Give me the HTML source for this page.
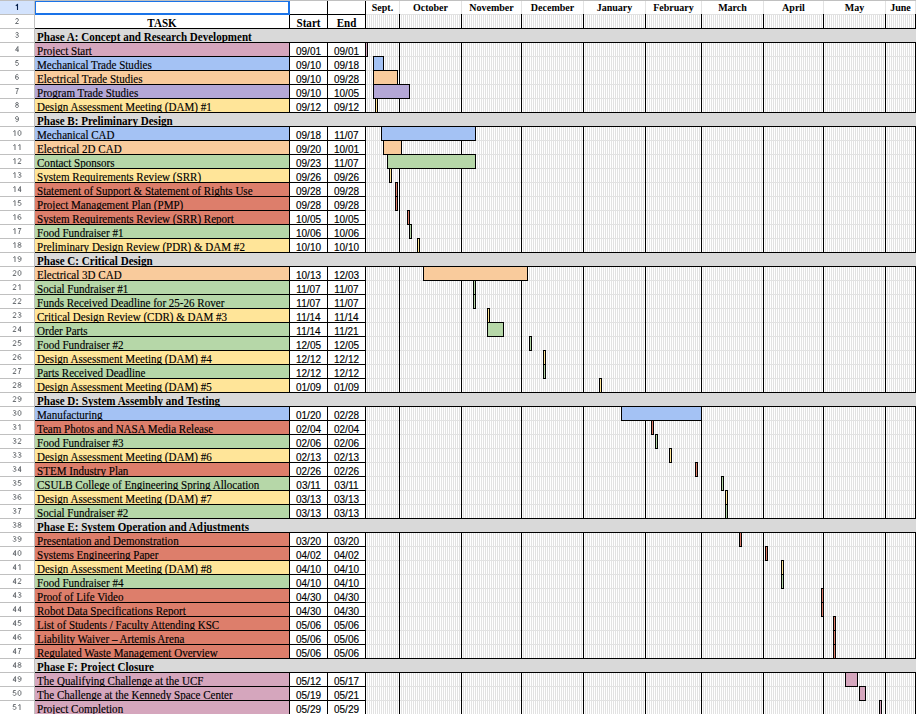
<!DOCTYPE html><html><head><meta charset="utf-8"><style>
html,body{margin:0;padding:0;background:#fff;}
body{width:916px;height:714px;overflow:hidden;position:relative;}
div{position:absolute;box-sizing:border-box;}
.t{font-family:"Liberation Serif",serif;font-size:12px;color:#000;-webkit-text-stroke:0.15px #000;white-space:nowrap;line-height:14px;overflow:hidden;}
.b{font-weight:bold;-webkit-text-stroke:0;}
.n{font-family:"Liberation Sans",sans-serif;font-size:8px;color:#5f6368;text-align:center;line-height:14px;}
.d{font-family:"Liberation Sans",sans-serif;font-size:10px;color:#000;-webkit-text-stroke:0.15px #000;text-align:center;line-height:16px;white-space:nowrap;overflow:hidden;}
</style></head><body>
<div style="left:366px;top:14px;width:550px;height:700px;background-image:linear-gradient(to bottom,#e2e2e2 1px,transparent 1px),linear-gradient(to right,#fff 1px,#e2e2e2 1px);background-size:550px 14px,2px 14px;"></div>
<div style="left:366px;top:1px;width:550px;height:13px;background:#fff"></div>
<div style="left:366px;top:14px;width:550px;height:1px;background:#e2e2e2"></div>
<div style="left:399px;top:0px;width:1px;height:14px;background:#e2e2e2"></div>
<div style="left:461px;top:0px;width:1px;height:14px;background:#e2e2e2"></div>
<div style="left:521px;top:0px;width:1px;height:14px;background:#e2e2e2"></div>
<div style="left:583px;top:0px;width:1px;height:14px;background:#e2e2e2"></div>
<div style="left:645px;top:0px;width:1px;height:14px;background:#e2e2e2"></div>
<div style="left:701px;top:0px;width:1px;height:14px;background:#e2e2e2"></div>
<div style="left:763px;top:0px;width:1px;height:14px;background:#e2e2e2"></div>
<div style="left:823px;top:0px;width:1px;height:14px;background:#e2e2e2"></div>
<div style="left:885px;top:0px;width:1px;height:14px;background:#e2e2e2"></div>
<div style="left:915px;top:0px;width:1px;height:14px;background:#e2e2e2"></div>
<div style="left:399px;top:14px;width:1px;height:700px;background:#000"></div>
<div style="left:461px;top:14px;width:1px;height:700px;background:#000"></div>
<div style="left:521px;top:14px;width:1px;height:700px;background:#000"></div>
<div style="left:583px;top:14px;width:1px;height:700px;background:#000"></div>
<div style="left:645px;top:14px;width:1px;height:700px;background:#000"></div>
<div style="left:701px;top:14px;width:1px;height:700px;background:#000"></div>
<div style="left:763px;top:14px;width:1px;height:700px;background:#000"></div>
<div style="left:823px;top:14px;width:1px;height:700px;background:#000"></div>
<div style="left:885px;top:14px;width:1px;height:700px;background:#000"></div>
<div style="left:915px;top:14px;width:1px;height:700px;background:#000"></div>
<div style="left:366px;top:28px;width:550px;height:1px;background:#000"></div>
<div style="left:0px;top:0px;width:916px;height:1px;background:#c0c0c0"></div>
<div style="left:0px;top:1px;width:34px;height:13px;background:#d3e3fd"></div>
<div style="left:0px;top:14px;width:34px;height:1px;background:#c0c0c0"></div>
<div style="left:0px;top:28px;width:34px;height:1px;background:#c0c0c0"></div>
<div style="left:0px;top:42px;width:34px;height:1px;background:#c0c0c0"></div>
<div style="left:0px;top:56px;width:34px;height:1px;background:#c0c0c0"></div>
<div style="left:0px;top:70px;width:34px;height:1px;background:#c0c0c0"></div>
<div style="left:0px;top:84px;width:34px;height:1px;background:#c0c0c0"></div>
<div style="left:0px;top:98px;width:34px;height:1px;background:#c0c0c0"></div>
<div style="left:0px;top:112px;width:34px;height:1px;background:#c0c0c0"></div>
<div style="left:0px;top:126px;width:34px;height:1px;background:#c0c0c0"></div>
<div style="left:0px;top:140px;width:34px;height:1px;background:#c0c0c0"></div>
<div style="left:0px;top:154px;width:34px;height:1px;background:#c0c0c0"></div>
<div style="left:0px;top:168px;width:34px;height:1px;background:#c0c0c0"></div>
<div style="left:0px;top:182px;width:34px;height:1px;background:#c0c0c0"></div>
<div style="left:0px;top:196px;width:34px;height:1px;background:#c0c0c0"></div>
<div style="left:0px;top:210px;width:34px;height:1px;background:#c0c0c0"></div>
<div style="left:0px;top:224px;width:34px;height:1px;background:#c0c0c0"></div>
<div style="left:0px;top:238px;width:34px;height:1px;background:#c0c0c0"></div>
<div style="left:0px;top:252px;width:34px;height:1px;background:#c0c0c0"></div>
<div style="left:0px;top:266px;width:34px;height:1px;background:#c0c0c0"></div>
<div style="left:0px;top:280px;width:34px;height:1px;background:#c0c0c0"></div>
<div style="left:0px;top:294px;width:34px;height:1px;background:#c0c0c0"></div>
<div style="left:0px;top:308px;width:34px;height:1px;background:#c0c0c0"></div>
<div style="left:0px;top:322px;width:34px;height:1px;background:#c0c0c0"></div>
<div style="left:0px;top:336px;width:34px;height:1px;background:#c0c0c0"></div>
<div style="left:0px;top:350px;width:34px;height:1px;background:#c0c0c0"></div>
<div style="left:0px;top:364px;width:34px;height:1px;background:#c0c0c0"></div>
<div style="left:0px;top:378px;width:34px;height:1px;background:#c0c0c0"></div>
<div style="left:0px;top:392px;width:34px;height:1px;background:#c0c0c0"></div>
<div style="left:0px;top:406px;width:34px;height:1px;background:#c0c0c0"></div>
<div style="left:0px;top:420px;width:34px;height:1px;background:#c0c0c0"></div>
<div style="left:0px;top:434px;width:34px;height:1px;background:#c0c0c0"></div>
<div style="left:0px;top:448px;width:34px;height:1px;background:#c0c0c0"></div>
<div style="left:0px;top:462px;width:34px;height:1px;background:#c0c0c0"></div>
<div style="left:0px;top:476px;width:34px;height:1px;background:#c0c0c0"></div>
<div style="left:0px;top:490px;width:34px;height:1px;background:#c0c0c0"></div>
<div style="left:0px;top:504px;width:34px;height:1px;background:#c0c0c0"></div>
<div style="left:0px;top:518px;width:34px;height:1px;background:#c0c0c0"></div>
<div style="left:0px;top:532px;width:34px;height:1px;background:#c0c0c0"></div>
<div style="left:0px;top:546px;width:34px;height:1px;background:#c0c0c0"></div>
<div style="left:0px;top:560px;width:34px;height:1px;background:#c0c0c0"></div>
<div style="left:0px;top:574px;width:34px;height:1px;background:#c0c0c0"></div>
<div style="left:0px;top:588px;width:34px;height:1px;background:#c0c0c0"></div>
<div style="left:0px;top:602px;width:34px;height:1px;background:#c0c0c0"></div>
<div style="left:0px;top:616px;width:34px;height:1px;background:#c0c0c0"></div>
<div style="left:0px;top:630px;width:34px;height:1px;background:#c0c0c0"></div>
<div style="left:0px;top:644px;width:34px;height:1px;background:#c0c0c0"></div>
<div style="left:0px;top:658px;width:34px;height:1px;background:#c0c0c0"></div>
<div style="left:0px;top:672px;width:34px;height:1px;background:#c0c0c0"></div>
<div style="left:0px;top:686px;width:34px;height:1px;background:#c0c0c0"></div>
<div style="left:0px;top:700px;width:34px;height:1px;background:#c0c0c0"></div>
<div style="left:0px;top:714px;width:34px;height:1px;background:#c0c0c0"></div>
<div style="left:34px;top:0px;width:1px;height:714px;background:#c0c0c0"></div>
<svg style="position:absolute;left:0;top:0" width="34" height="714" viewBox="0 0 34 714"><path transform="translate(15.0,4)" d="M0.8,1.7 L2.5,0.5 L2.5,6" fill="none" stroke="#041e49" stroke-width="1.1"/><path transform="translate(15.0,18)" d="M0.6,1.5 C0.8,0.7 1.3,0.5 2,0.5 C2.9,0.5 3.4,1 3.4,1.8 C3.4,2.8 2.4,3.5 0.5,5.5 L3.6,5.5" fill="none" stroke="#5f6368" stroke-width="0.9"/><path transform="translate(15.0,32)" d="M0.6,1.2 C0.9,0.7 1.4,0.5 2,0.5 C2.9,0.5 3.3,1 3.3,1.6 C3.3,2.4 2.6,2.8 1.6,2.8 C2.8,2.8 3.5,3.3 3.5,4.1 C3.5,5 2.8,5.5 2,5.5 C1.3,5.5 0.7,5.2 0.5,4.6" fill="none" stroke="#5f6368" stroke-width="0.9"/><path transform="translate(15.0,46)" d="M2.9,6 L2.9,0.5 L0.5,4.2 L3.8,4.2" fill="none" stroke="#5f6368" stroke-width="0.9"/><path transform="translate(15.0,60)" d="M3.3,0.5 L1,0.5 L0.7,2.9 C1.1,2.5 1.5,2.4 2,2.4 C2.9,2.4 3.5,3 3.5,3.9 C3.5,4.9 2.9,5.5 2,5.5 C1.3,5.5 0.7,5.2 0.5,4.6" fill="none" stroke="#5f6368" stroke-width="0.9"/><path transform="translate(15.0,74)" d="M3.3,1.1 C3.1,0.7 2.6,0.5 2.1,0.5 C1,0.5 0.5,1.6 0.5,3.2 C0.5,4.6 1,5.5 2,5.5 C2.9,5.5 3.5,4.9 3.5,4 C3.5,3.1 2.9,2.6 2.1,2.6 C1.3,2.6 0.7,3 0.5,3.6" fill="none" stroke="#5f6368" stroke-width="0.9"/><path transform="translate(15.0,88)" d="M0.5,0.5 L3.5,0.5 C2.4,1.9 1.7,3.6 1.6,6" fill="none" stroke="#5f6368" stroke-width="0.9"/><path transform="translate(15.0,102)" d="M2,2.8 C1.2,2.8 0.7,2.3 0.7,1.65 C0.7,1 1.2,0.5 2,0.5 C2.8,0.5 3.3,1 3.3,1.65 C3.3,2.3 2.8,2.8 2,2.8 C1.1,2.8 0.5,3.3 0.5,4.15 C0.5,5 1.1,5.5 2,5.5 C2.9,5.5 3.5,5 3.5,4.15 C3.5,3.3 2.9,2.8 2,2.8 Z" fill="none" stroke="#5f6368" stroke-width="0.9"/><path transform="translate(15.0,116) rotate(180 2 3)" d="M3.3,1.1 C3.1,0.7 2.6,0.5 2.1,0.5 C1,0.5 0.5,1.6 0.5,3.2 C0.5,4.6 1,5.5 2,5.5 C2.9,5.5 3.5,4.9 3.5,4 C3.5,3.1 2.9,2.6 2.1,2.6 C1.3,2.6 0.7,3 0.5,3.6" fill="none" stroke="#5f6368" stroke-width="0.9"/><path transform="translate(12.5,130)" d="M0.8,1.7 L2.5,0.5 L2.5,6" fill="none" stroke="#5f6368" stroke-width="0.9"/><path transform="translate(17.5,130)" d="M2,0.5 C0.9,0.5 0.5,1.6 0.5,3 C0.5,4.4 0.9,5.5 2,5.5 C3.1,5.5 3.5,4.4 3.5,3 C3.5,1.6 3.1,0.5 2,0.5 Z" fill="none" stroke="#5f6368" stroke-width="0.9"/><path transform="translate(12.5,144)" d="M0.8,1.7 L2.5,0.5 L2.5,6" fill="none" stroke="#5f6368" stroke-width="0.9"/><path transform="translate(17.5,144)" d="M0.8,1.7 L2.5,0.5 L2.5,6" fill="none" stroke="#5f6368" stroke-width="0.9"/><path transform="translate(12.5,158)" d="M0.8,1.7 L2.5,0.5 L2.5,6" fill="none" stroke="#5f6368" stroke-width="0.9"/><path transform="translate(17.5,158)" d="M0.6,1.5 C0.8,0.7 1.3,0.5 2,0.5 C2.9,0.5 3.4,1 3.4,1.8 C3.4,2.8 2.4,3.5 0.5,5.5 L3.6,5.5" fill="none" stroke="#5f6368" stroke-width="0.9"/><path transform="translate(12.5,172)" d="M0.8,1.7 L2.5,0.5 L2.5,6" fill="none" stroke="#5f6368" stroke-width="0.9"/><path transform="translate(17.5,172)" d="M0.6,1.2 C0.9,0.7 1.4,0.5 2,0.5 C2.9,0.5 3.3,1 3.3,1.6 C3.3,2.4 2.6,2.8 1.6,2.8 C2.8,2.8 3.5,3.3 3.5,4.1 C3.5,5 2.8,5.5 2,5.5 C1.3,5.5 0.7,5.2 0.5,4.6" fill="none" stroke="#5f6368" stroke-width="0.9"/><path transform="translate(12.5,186)" d="M0.8,1.7 L2.5,0.5 L2.5,6" fill="none" stroke="#5f6368" stroke-width="0.9"/><path transform="translate(17.5,186)" d="M2.9,6 L2.9,0.5 L0.5,4.2 L3.8,4.2" fill="none" stroke="#5f6368" stroke-width="0.9"/><path transform="translate(12.5,200)" d="M0.8,1.7 L2.5,0.5 L2.5,6" fill="none" stroke="#5f6368" stroke-width="0.9"/><path transform="translate(17.5,200)" d="M3.3,0.5 L1,0.5 L0.7,2.9 C1.1,2.5 1.5,2.4 2,2.4 C2.9,2.4 3.5,3 3.5,3.9 C3.5,4.9 2.9,5.5 2,5.5 C1.3,5.5 0.7,5.2 0.5,4.6" fill="none" stroke="#5f6368" stroke-width="0.9"/><path transform="translate(12.5,214)" d="M0.8,1.7 L2.5,0.5 L2.5,6" fill="none" stroke="#5f6368" stroke-width="0.9"/><path transform="translate(17.5,214)" d="M3.3,1.1 C3.1,0.7 2.6,0.5 2.1,0.5 C1,0.5 0.5,1.6 0.5,3.2 C0.5,4.6 1,5.5 2,5.5 C2.9,5.5 3.5,4.9 3.5,4 C3.5,3.1 2.9,2.6 2.1,2.6 C1.3,2.6 0.7,3 0.5,3.6" fill="none" stroke="#5f6368" stroke-width="0.9"/><path transform="translate(12.5,228)" d="M0.8,1.7 L2.5,0.5 L2.5,6" fill="none" stroke="#5f6368" stroke-width="0.9"/><path transform="translate(17.5,228)" d="M0.5,0.5 L3.5,0.5 C2.4,1.9 1.7,3.6 1.6,6" fill="none" stroke="#5f6368" stroke-width="0.9"/><path transform="translate(12.5,242)" d="M0.8,1.7 L2.5,0.5 L2.5,6" fill="none" stroke="#5f6368" stroke-width="0.9"/><path transform="translate(17.5,242)" d="M2,2.8 C1.2,2.8 0.7,2.3 0.7,1.65 C0.7,1 1.2,0.5 2,0.5 C2.8,0.5 3.3,1 3.3,1.65 C3.3,2.3 2.8,2.8 2,2.8 C1.1,2.8 0.5,3.3 0.5,4.15 C0.5,5 1.1,5.5 2,5.5 C2.9,5.5 3.5,5 3.5,4.15 C3.5,3.3 2.9,2.8 2,2.8 Z" fill="none" stroke="#5f6368" stroke-width="0.9"/><path transform="translate(12.5,256)" d="M0.8,1.7 L2.5,0.5 L2.5,6" fill="none" stroke="#5f6368" stroke-width="0.9"/><path transform="translate(17.5,256) rotate(180 2 3)" d="M3.3,1.1 C3.1,0.7 2.6,0.5 2.1,0.5 C1,0.5 0.5,1.6 0.5,3.2 C0.5,4.6 1,5.5 2,5.5 C2.9,5.5 3.5,4.9 3.5,4 C3.5,3.1 2.9,2.6 2.1,2.6 C1.3,2.6 0.7,3 0.5,3.6" fill="none" stroke="#5f6368" stroke-width="0.9"/><path transform="translate(12.5,270)" d="M0.6,1.5 C0.8,0.7 1.3,0.5 2,0.5 C2.9,0.5 3.4,1 3.4,1.8 C3.4,2.8 2.4,3.5 0.5,5.5 L3.6,5.5" fill="none" stroke="#5f6368" stroke-width="0.9"/><path transform="translate(17.5,270)" d="M2,0.5 C0.9,0.5 0.5,1.6 0.5,3 C0.5,4.4 0.9,5.5 2,5.5 C3.1,5.5 3.5,4.4 3.5,3 C3.5,1.6 3.1,0.5 2,0.5 Z" fill="none" stroke="#5f6368" stroke-width="0.9"/><path transform="translate(12.5,284)" d="M0.6,1.5 C0.8,0.7 1.3,0.5 2,0.5 C2.9,0.5 3.4,1 3.4,1.8 C3.4,2.8 2.4,3.5 0.5,5.5 L3.6,5.5" fill="none" stroke="#5f6368" stroke-width="0.9"/><path transform="translate(17.5,284)" d="M0.8,1.7 L2.5,0.5 L2.5,6" fill="none" stroke="#5f6368" stroke-width="0.9"/><path transform="translate(12.5,298)" d="M0.6,1.5 C0.8,0.7 1.3,0.5 2,0.5 C2.9,0.5 3.4,1 3.4,1.8 C3.4,2.8 2.4,3.5 0.5,5.5 L3.6,5.5" fill="none" stroke="#5f6368" stroke-width="0.9"/><path transform="translate(17.5,298)" d="M0.6,1.5 C0.8,0.7 1.3,0.5 2,0.5 C2.9,0.5 3.4,1 3.4,1.8 C3.4,2.8 2.4,3.5 0.5,5.5 L3.6,5.5" fill="none" stroke="#5f6368" stroke-width="0.9"/><path transform="translate(12.5,312)" d="M0.6,1.5 C0.8,0.7 1.3,0.5 2,0.5 C2.9,0.5 3.4,1 3.4,1.8 C3.4,2.8 2.4,3.5 0.5,5.5 L3.6,5.5" fill="none" stroke="#5f6368" stroke-width="0.9"/><path transform="translate(17.5,312)" d="M0.6,1.2 C0.9,0.7 1.4,0.5 2,0.5 C2.9,0.5 3.3,1 3.3,1.6 C3.3,2.4 2.6,2.8 1.6,2.8 C2.8,2.8 3.5,3.3 3.5,4.1 C3.5,5 2.8,5.5 2,5.5 C1.3,5.5 0.7,5.2 0.5,4.6" fill="none" stroke="#5f6368" stroke-width="0.9"/><path transform="translate(12.5,326)" d="M0.6,1.5 C0.8,0.7 1.3,0.5 2,0.5 C2.9,0.5 3.4,1 3.4,1.8 C3.4,2.8 2.4,3.5 0.5,5.5 L3.6,5.5" fill="none" stroke="#5f6368" stroke-width="0.9"/><path transform="translate(17.5,326)" d="M2.9,6 L2.9,0.5 L0.5,4.2 L3.8,4.2" fill="none" stroke="#5f6368" stroke-width="0.9"/><path transform="translate(12.5,340)" d="M0.6,1.5 C0.8,0.7 1.3,0.5 2,0.5 C2.9,0.5 3.4,1 3.4,1.8 C3.4,2.8 2.4,3.5 0.5,5.5 L3.6,5.5" fill="none" stroke="#5f6368" stroke-width="0.9"/><path transform="translate(17.5,340)" d="M3.3,0.5 L1,0.5 L0.7,2.9 C1.1,2.5 1.5,2.4 2,2.4 C2.9,2.4 3.5,3 3.5,3.9 C3.5,4.9 2.9,5.5 2,5.5 C1.3,5.5 0.7,5.2 0.5,4.6" fill="none" stroke="#5f6368" stroke-width="0.9"/><path transform="translate(12.5,354)" d="M0.6,1.5 C0.8,0.7 1.3,0.5 2,0.5 C2.9,0.5 3.4,1 3.4,1.8 C3.4,2.8 2.4,3.5 0.5,5.5 L3.6,5.5" fill="none" stroke="#5f6368" stroke-width="0.9"/><path transform="translate(17.5,354)" d="M3.3,1.1 C3.1,0.7 2.6,0.5 2.1,0.5 C1,0.5 0.5,1.6 0.5,3.2 C0.5,4.6 1,5.5 2,5.5 C2.9,5.5 3.5,4.9 3.5,4 C3.5,3.1 2.9,2.6 2.1,2.6 C1.3,2.6 0.7,3 0.5,3.6" fill="none" stroke="#5f6368" stroke-width="0.9"/><path transform="translate(12.5,368)" d="M0.6,1.5 C0.8,0.7 1.3,0.5 2,0.5 C2.9,0.5 3.4,1 3.4,1.8 C3.4,2.8 2.4,3.5 0.5,5.5 L3.6,5.5" fill="none" stroke="#5f6368" stroke-width="0.9"/><path transform="translate(17.5,368)" d="M0.5,0.5 L3.5,0.5 C2.4,1.9 1.7,3.6 1.6,6" fill="none" stroke="#5f6368" stroke-width="0.9"/><path transform="translate(12.5,382)" d="M0.6,1.5 C0.8,0.7 1.3,0.5 2,0.5 C2.9,0.5 3.4,1 3.4,1.8 C3.4,2.8 2.4,3.5 0.5,5.5 L3.6,5.5" fill="none" stroke="#5f6368" stroke-width="0.9"/><path transform="translate(17.5,382)" d="M2,2.8 C1.2,2.8 0.7,2.3 0.7,1.65 C0.7,1 1.2,0.5 2,0.5 C2.8,0.5 3.3,1 3.3,1.65 C3.3,2.3 2.8,2.8 2,2.8 C1.1,2.8 0.5,3.3 0.5,4.15 C0.5,5 1.1,5.5 2,5.5 C2.9,5.5 3.5,5 3.5,4.15 C3.5,3.3 2.9,2.8 2,2.8 Z" fill="none" stroke="#5f6368" stroke-width="0.9"/><path transform="translate(12.5,396)" d="M0.6,1.5 C0.8,0.7 1.3,0.5 2,0.5 C2.9,0.5 3.4,1 3.4,1.8 C3.4,2.8 2.4,3.5 0.5,5.5 L3.6,5.5" fill="none" stroke="#5f6368" stroke-width="0.9"/><path transform="translate(17.5,396) rotate(180 2 3)" d="M3.3,1.1 C3.1,0.7 2.6,0.5 2.1,0.5 C1,0.5 0.5,1.6 0.5,3.2 C0.5,4.6 1,5.5 2,5.5 C2.9,5.5 3.5,4.9 3.5,4 C3.5,3.1 2.9,2.6 2.1,2.6 C1.3,2.6 0.7,3 0.5,3.6" fill="none" stroke="#5f6368" stroke-width="0.9"/><path transform="translate(12.5,410)" d="M0.6,1.2 C0.9,0.7 1.4,0.5 2,0.5 C2.9,0.5 3.3,1 3.3,1.6 C3.3,2.4 2.6,2.8 1.6,2.8 C2.8,2.8 3.5,3.3 3.5,4.1 C3.5,5 2.8,5.5 2,5.5 C1.3,5.5 0.7,5.2 0.5,4.6" fill="none" stroke="#5f6368" stroke-width="0.9"/><path transform="translate(17.5,410)" d="M2,0.5 C0.9,0.5 0.5,1.6 0.5,3 C0.5,4.4 0.9,5.5 2,5.5 C3.1,5.5 3.5,4.4 3.5,3 C3.5,1.6 3.1,0.5 2,0.5 Z" fill="none" stroke="#5f6368" stroke-width="0.9"/><path transform="translate(12.5,424)" d="M0.6,1.2 C0.9,0.7 1.4,0.5 2,0.5 C2.9,0.5 3.3,1 3.3,1.6 C3.3,2.4 2.6,2.8 1.6,2.8 C2.8,2.8 3.5,3.3 3.5,4.1 C3.5,5 2.8,5.5 2,5.5 C1.3,5.5 0.7,5.2 0.5,4.6" fill="none" stroke="#5f6368" stroke-width="0.9"/><path transform="translate(17.5,424)" d="M0.8,1.7 L2.5,0.5 L2.5,6" fill="none" stroke="#5f6368" stroke-width="0.9"/><path transform="translate(12.5,438)" d="M0.6,1.2 C0.9,0.7 1.4,0.5 2,0.5 C2.9,0.5 3.3,1 3.3,1.6 C3.3,2.4 2.6,2.8 1.6,2.8 C2.8,2.8 3.5,3.3 3.5,4.1 C3.5,5 2.8,5.5 2,5.5 C1.3,5.5 0.7,5.2 0.5,4.6" fill="none" stroke="#5f6368" stroke-width="0.9"/><path transform="translate(17.5,438)" d="M0.6,1.5 C0.8,0.7 1.3,0.5 2,0.5 C2.9,0.5 3.4,1 3.4,1.8 C3.4,2.8 2.4,3.5 0.5,5.5 L3.6,5.5" fill="none" stroke="#5f6368" stroke-width="0.9"/><path transform="translate(12.5,452)" d="M0.6,1.2 C0.9,0.7 1.4,0.5 2,0.5 C2.9,0.5 3.3,1 3.3,1.6 C3.3,2.4 2.6,2.8 1.6,2.8 C2.8,2.8 3.5,3.3 3.5,4.1 C3.5,5 2.8,5.5 2,5.5 C1.3,5.5 0.7,5.2 0.5,4.6" fill="none" stroke="#5f6368" stroke-width="0.9"/><path transform="translate(17.5,452)" d="M0.6,1.2 C0.9,0.7 1.4,0.5 2,0.5 C2.9,0.5 3.3,1 3.3,1.6 C3.3,2.4 2.6,2.8 1.6,2.8 C2.8,2.8 3.5,3.3 3.5,4.1 C3.5,5 2.8,5.5 2,5.5 C1.3,5.5 0.7,5.2 0.5,4.6" fill="none" stroke="#5f6368" stroke-width="0.9"/><path transform="translate(12.5,466)" d="M0.6,1.2 C0.9,0.7 1.4,0.5 2,0.5 C2.9,0.5 3.3,1 3.3,1.6 C3.3,2.4 2.6,2.8 1.6,2.8 C2.8,2.8 3.5,3.3 3.5,4.1 C3.5,5 2.8,5.5 2,5.5 C1.3,5.5 0.7,5.2 0.5,4.6" fill="none" stroke="#5f6368" stroke-width="0.9"/><path transform="translate(17.5,466)" d="M2.9,6 L2.9,0.5 L0.5,4.2 L3.8,4.2" fill="none" stroke="#5f6368" stroke-width="0.9"/><path transform="translate(12.5,480)" d="M0.6,1.2 C0.9,0.7 1.4,0.5 2,0.5 C2.9,0.5 3.3,1 3.3,1.6 C3.3,2.4 2.6,2.8 1.6,2.8 C2.8,2.8 3.5,3.3 3.5,4.1 C3.5,5 2.8,5.5 2,5.5 C1.3,5.5 0.7,5.2 0.5,4.6" fill="none" stroke="#5f6368" stroke-width="0.9"/><path transform="translate(17.5,480)" d="M3.3,0.5 L1,0.5 L0.7,2.9 C1.1,2.5 1.5,2.4 2,2.4 C2.9,2.4 3.5,3 3.5,3.9 C3.5,4.9 2.9,5.5 2,5.5 C1.3,5.5 0.7,5.2 0.5,4.6" fill="none" stroke="#5f6368" stroke-width="0.9"/><path transform="translate(12.5,494)" d="M0.6,1.2 C0.9,0.7 1.4,0.5 2,0.5 C2.9,0.5 3.3,1 3.3,1.6 C3.3,2.4 2.6,2.8 1.6,2.8 C2.8,2.8 3.5,3.3 3.5,4.1 C3.5,5 2.8,5.5 2,5.5 C1.3,5.5 0.7,5.2 0.5,4.6" fill="none" stroke="#5f6368" stroke-width="0.9"/><path transform="translate(17.5,494)" d="M3.3,1.1 C3.1,0.7 2.6,0.5 2.1,0.5 C1,0.5 0.5,1.6 0.5,3.2 C0.5,4.6 1,5.5 2,5.5 C2.9,5.5 3.5,4.9 3.5,4 C3.5,3.1 2.9,2.6 2.1,2.6 C1.3,2.6 0.7,3 0.5,3.6" fill="none" stroke="#5f6368" stroke-width="0.9"/><path transform="translate(12.5,508)" d="M0.6,1.2 C0.9,0.7 1.4,0.5 2,0.5 C2.9,0.5 3.3,1 3.3,1.6 C3.3,2.4 2.6,2.8 1.6,2.8 C2.8,2.8 3.5,3.3 3.5,4.1 C3.5,5 2.8,5.5 2,5.5 C1.3,5.5 0.7,5.2 0.5,4.6" fill="none" stroke="#5f6368" stroke-width="0.9"/><path transform="translate(17.5,508)" d="M0.5,0.5 L3.5,0.5 C2.4,1.9 1.7,3.6 1.6,6" fill="none" stroke="#5f6368" stroke-width="0.9"/><path transform="translate(12.5,522)" d="M0.6,1.2 C0.9,0.7 1.4,0.5 2,0.5 C2.9,0.5 3.3,1 3.3,1.6 C3.3,2.4 2.6,2.8 1.6,2.8 C2.8,2.8 3.5,3.3 3.5,4.1 C3.5,5 2.8,5.5 2,5.5 C1.3,5.5 0.7,5.2 0.5,4.6" fill="none" stroke="#5f6368" stroke-width="0.9"/><path transform="translate(17.5,522)" d="M2,2.8 C1.2,2.8 0.7,2.3 0.7,1.65 C0.7,1 1.2,0.5 2,0.5 C2.8,0.5 3.3,1 3.3,1.65 C3.3,2.3 2.8,2.8 2,2.8 C1.1,2.8 0.5,3.3 0.5,4.15 C0.5,5 1.1,5.5 2,5.5 C2.9,5.5 3.5,5 3.5,4.15 C3.5,3.3 2.9,2.8 2,2.8 Z" fill="none" stroke="#5f6368" stroke-width="0.9"/><path transform="translate(12.5,536)" d="M0.6,1.2 C0.9,0.7 1.4,0.5 2,0.5 C2.9,0.5 3.3,1 3.3,1.6 C3.3,2.4 2.6,2.8 1.6,2.8 C2.8,2.8 3.5,3.3 3.5,4.1 C3.5,5 2.8,5.5 2,5.5 C1.3,5.5 0.7,5.2 0.5,4.6" fill="none" stroke="#5f6368" stroke-width="0.9"/><path transform="translate(17.5,536) rotate(180 2 3)" d="M3.3,1.1 C3.1,0.7 2.6,0.5 2.1,0.5 C1,0.5 0.5,1.6 0.5,3.2 C0.5,4.6 1,5.5 2,5.5 C2.9,5.5 3.5,4.9 3.5,4 C3.5,3.1 2.9,2.6 2.1,2.6 C1.3,2.6 0.7,3 0.5,3.6" fill="none" stroke="#5f6368" stroke-width="0.9"/><path transform="translate(12.5,550)" d="M2.9,6 L2.9,0.5 L0.5,4.2 L3.8,4.2" fill="none" stroke="#5f6368" stroke-width="0.9"/><path transform="translate(17.5,550)" d="M2,0.5 C0.9,0.5 0.5,1.6 0.5,3 C0.5,4.4 0.9,5.5 2,5.5 C3.1,5.5 3.5,4.4 3.5,3 C3.5,1.6 3.1,0.5 2,0.5 Z" fill="none" stroke="#5f6368" stroke-width="0.9"/><path transform="translate(12.5,564)" d="M2.9,6 L2.9,0.5 L0.5,4.2 L3.8,4.2" fill="none" stroke="#5f6368" stroke-width="0.9"/><path transform="translate(17.5,564)" d="M0.8,1.7 L2.5,0.5 L2.5,6" fill="none" stroke="#5f6368" stroke-width="0.9"/><path transform="translate(12.5,578)" d="M2.9,6 L2.9,0.5 L0.5,4.2 L3.8,4.2" fill="none" stroke="#5f6368" stroke-width="0.9"/><path transform="translate(17.5,578)" d="M0.6,1.5 C0.8,0.7 1.3,0.5 2,0.5 C2.9,0.5 3.4,1 3.4,1.8 C3.4,2.8 2.4,3.5 0.5,5.5 L3.6,5.5" fill="none" stroke="#5f6368" stroke-width="0.9"/><path transform="translate(12.5,592)" d="M2.9,6 L2.9,0.5 L0.5,4.2 L3.8,4.2" fill="none" stroke="#5f6368" stroke-width="0.9"/><path transform="translate(17.5,592)" d="M0.6,1.2 C0.9,0.7 1.4,0.5 2,0.5 C2.9,0.5 3.3,1 3.3,1.6 C3.3,2.4 2.6,2.8 1.6,2.8 C2.8,2.8 3.5,3.3 3.5,4.1 C3.5,5 2.8,5.5 2,5.5 C1.3,5.5 0.7,5.2 0.5,4.6" fill="none" stroke="#5f6368" stroke-width="0.9"/><path transform="translate(12.5,606)" d="M2.9,6 L2.9,0.5 L0.5,4.2 L3.8,4.2" fill="none" stroke="#5f6368" stroke-width="0.9"/><path transform="translate(17.5,606)" d="M2.9,6 L2.9,0.5 L0.5,4.2 L3.8,4.2" fill="none" stroke="#5f6368" stroke-width="0.9"/><path transform="translate(12.5,620)" d="M2.9,6 L2.9,0.5 L0.5,4.2 L3.8,4.2" fill="none" stroke="#5f6368" stroke-width="0.9"/><path transform="translate(17.5,620)" d="M3.3,0.5 L1,0.5 L0.7,2.9 C1.1,2.5 1.5,2.4 2,2.4 C2.9,2.4 3.5,3 3.5,3.9 C3.5,4.9 2.9,5.5 2,5.5 C1.3,5.5 0.7,5.2 0.5,4.6" fill="none" stroke="#5f6368" stroke-width="0.9"/><path transform="translate(12.5,634)" d="M2.9,6 L2.9,0.5 L0.5,4.2 L3.8,4.2" fill="none" stroke="#5f6368" stroke-width="0.9"/><path transform="translate(17.5,634)" d="M3.3,1.1 C3.1,0.7 2.6,0.5 2.1,0.5 C1,0.5 0.5,1.6 0.5,3.2 C0.5,4.6 1,5.5 2,5.5 C2.9,5.5 3.5,4.9 3.5,4 C3.5,3.1 2.9,2.6 2.1,2.6 C1.3,2.6 0.7,3 0.5,3.6" fill="none" stroke="#5f6368" stroke-width="0.9"/><path transform="translate(12.5,648)" d="M2.9,6 L2.9,0.5 L0.5,4.2 L3.8,4.2" fill="none" stroke="#5f6368" stroke-width="0.9"/><path transform="translate(17.5,648)" d="M0.5,0.5 L3.5,0.5 C2.4,1.9 1.7,3.6 1.6,6" fill="none" stroke="#5f6368" stroke-width="0.9"/><path transform="translate(12.5,662)" d="M2.9,6 L2.9,0.5 L0.5,4.2 L3.8,4.2" fill="none" stroke="#5f6368" stroke-width="0.9"/><path transform="translate(17.5,662)" d="M2,2.8 C1.2,2.8 0.7,2.3 0.7,1.65 C0.7,1 1.2,0.5 2,0.5 C2.8,0.5 3.3,1 3.3,1.65 C3.3,2.3 2.8,2.8 2,2.8 C1.1,2.8 0.5,3.3 0.5,4.15 C0.5,5 1.1,5.5 2,5.5 C2.9,5.5 3.5,5 3.5,4.15 C3.5,3.3 2.9,2.8 2,2.8 Z" fill="none" stroke="#5f6368" stroke-width="0.9"/><path transform="translate(12.5,676)" d="M2.9,6 L2.9,0.5 L0.5,4.2 L3.8,4.2" fill="none" stroke="#5f6368" stroke-width="0.9"/><path transform="translate(17.5,676) rotate(180 2 3)" d="M3.3,1.1 C3.1,0.7 2.6,0.5 2.1,0.5 C1,0.5 0.5,1.6 0.5,3.2 C0.5,4.6 1,5.5 2,5.5 C2.9,5.5 3.5,4.9 3.5,4 C3.5,3.1 2.9,2.6 2.1,2.6 C1.3,2.6 0.7,3 0.5,3.6" fill="none" stroke="#5f6368" stroke-width="0.9"/><path transform="translate(12.5,690)" d="M3.3,0.5 L1,0.5 L0.7,2.9 C1.1,2.5 1.5,2.4 2,2.4 C2.9,2.4 3.5,3 3.5,3.9 C3.5,4.9 2.9,5.5 2,5.5 C1.3,5.5 0.7,5.2 0.5,4.6" fill="none" stroke="#5f6368" stroke-width="0.9"/><path transform="translate(17.5,690)" d="M2,0.5 C0.9,0.5 0.5,1.6 0.5,3 C0.5,4.4 0.9,5.5 2,5.5 C3.1,5.5 3.5,4.4 3.5,3 C3.5,1.6 3.1,0.5 2,0.5 Z" fill="none" stroke="#5f6368" stroke-width="0.9"/><path transform="translate(12.5,704)" d="M3.3,0.5 L1,0.5 L0.7,2.9 C1.1,2.5 1.5,2.4 2,2.4 C2.9,2.4 3.5,3 3.5,3.9 C3.5,4.9 2.9,5.5 2,5.5 C1.3,5.5 0.7,5.2 0.5,4.6" fill="none" stroke="#5f6368" stroke-width="0.9"/><path transform="translate(17.5,704)" d="M0.8,1.7 L2.5,0.5 L2.5,6" fill="none" stroke="#5f6368" stroke-width="0.9"/></svg>
<div class="t b" style="left:366px;top:1px;width:33px;height:13px;text-align:center;font-size:10px;">Sept.</div>
<div class="t b" style="left:400px;top:1px;width:61px;height:13px;text-align:center;font-size:10px;">October</div>
<div class="t b" style="left:462px;top:1px;width:59px;height:13px;text-align:center;font-size:10px;">November</div>
<div class="t b" style="left:522px;top:1px;width:61px;height:13px;text-align:center;font-size:10px;">December</div>
<div class="t b" style="left:584px;top:1px;width:61px;height:13px;text-align:center;font-size:10px;">January</div>
<div class="t b" style="left:646px;top:1px;width:55px;height:13px;text-align:center;font-size:10px;">February</div>
<div class="t b" style="left:702px;top:1px;width:61px;height:13px;text-align:center;font-size:10px;">March</div>
<div class="t b" style="left:764px;top:1px;width:59px;height:13px;text-align:center;font-size:10px;">April</div>
<div class="t b" style="left:824px;top:1px;width:61px;height:13px;text-align:center;font-size:10px;">May</div>
<div class="t b" style="left:886px;top:1px;width:29px;height:13px;text-align:center;font-size:10px;">June</div>
<div style="left:289px;top:14px;width:77px;height:1px;background:#000"></div>
<div style="left:327px;top:1px;width:1px;height:14px;background:#000"></div>
<div style="left:365px;top:1px;width:1px;height:14px;background:#000"></div>
<div style="left:35px;top:14px;width:331px;height:15px;border-top:1px solid #000;border-bottom:1px solid #000"></div>
<div style="left:289px;top:14px;width:1px;height:15px;background:#000"></div>
<div style="left:327px;top:14px;width:1px;height:15px;background:#000"></div>
<div style="left:365px;top:14px;width:1px;height:15px;background:#000"></div>
<div class="t b" style="left:35px;top:16px;width:254px;height:12px;text-align:center;transform:scaleX(0.92);">TASK</div>
<div class="t b" style="left:290px;top:16px;width:37px;height:12px;text-align:center;transform:scaleX(0.92);">Start</div>
<div class="t b" style="left:328px;top:16px;width:37px;height:12px;text-align:center;transform:scaleX(0.92);">End</div>
<div style="left:35px;top:28px;width:881px;height:15px;background:#d9d9d9;border-top:1px solid #000;border-bottom:1px solid #000"></div>
<div class="t b" style="left:37px;top:30px;width:800px;height:12px;transform:scaleX(0.92);transform-origin:0 0;">Phase A: Concept and Research Development</div>
<div style="left:35px;top:42px;width:255px;height:15px;background:#d5a6bd;border-top:1px solid #000;border-bottom:1px solid #000;border-right:1px solid #000"></div>
<div style="left:289px;top:42px;width:77px;height:15px;background:#fff;border:1px solid #000"></div>
<div style="left:327px;top:42px;width:1px;height:15px;background:#000"></div>
<div class="t" style="left:37px;top:44px;width:272px;height:12px;transform:scaleX(0.92);transform-origin:0 0;">Project Start</div>
<div class="d" style="left:290px;top:44px;width:37px;height:12px;">09/01</div>
<div class="d" style="left:328px;top:44px;width:37px;height:12px;">09/01</div>
<div style="left:365px;top:42px;width:3px;height:15px;background:#d5a6bd;border:1px solid #000"></div>
<div style="left:35px;top:56px;width:255px;height:15px;background:#a4c2f4;border-top:1px solid #000;border-bottom:1px solid #000;border-right:1px solid #000"></div>
<div style="left:289px;top:56px;width:77px;height:15px;background:#fff;border:1px solid #000"></div>
<div style="left:327px;top:56px;width:1px;height:15px;background:#000"></div>
<div class="t" style="left:37px;top:58px;width:272px;height:12px;transform:scaleX(0.92);transform-origin:0 0;">Mechanical Trade Studies</div>
<div class="d" style="left:290px;top:58px;width:37px;height:12px;">09/10</div>
<div class="d" style="left:328px;top:58px;width:37px;height:12px;">09/18</div>
<div style="left:373px;top:56px;width:11px;height:15px;background:#a4c2f4;border:1px solid #000"></div>
<div style="left:35px;top:70px;width:255px;height:15px;background:#f9cb9c;border-top:1px solid #000;border-bottom:1px solid #000;border-right:1px solid #000"></div>
<div style="left:289px;top:70px;width:77px;height:15px;background:#fff;border:1px solid #000"></div>
<div style="left:327px;top:70px;width:1px;height:15px;background:#000"></div>
<div class="t" style="left:37px;top:72px;width:272px;height:12px;transform:scaleX(0.92);transform-origin:0 0;">Electrical Trade Studies</div>
<div class="d" style="left:290px;top:72px;width:37px;height:12px;">09/10</div>
<div class="d" style="left:328px;top:72px;width:37px;height:12px;">09/28</div>
<div style="left:373px;top:70px;width:25px;height:15px;background:#f9cb9c;border:1px solid #000"></div>
<div style="left:35px;top:84px;width:255px;height:15px;background:#b4a7d6;border-top:1px solid #000;border-bottom:1px solid #000;border-right:1px solid #000"></div>
<div style="left:289px;top:84px;width:77px;height:15px;background:#fff;border:1px solid #000"></div>
<div style="left:327px;top:84px;width:1px;height:15px;background:#000"></div>
<div class="t" style="left:37px;top:86px;width:272px;height:12px;transform:scaleX(0.92);transform-origin:0 0;">Program Trade Studies</div>
<div class="d" style="left:290px;top:86px;width:37px;height:12px;">09/10</div>
<div class="d" style="left:328px;top:86px;width:37px;height:12px;">10/05</div>
<div style="left:373px;top:84px;width:37px;height:15px;background:#b4a7d6;border:1px solid #000"></div>
<div style="left:35px;top:98px;width:255px;height:15px;background:#ffe599;border-top:1px solid #000;border-bottom:1px solid #000;border-right:1px solid #000"></div>
<div style="left:289px;top:98px;width:77px;height:15px;background:#fff;border:1px solid #000"></div>
<div style="left:327px;top:98px;width:1px;height:15px;background:#000"></div>
<div class="t" style="left:37px;top:100px;width:272px;height:12px;transform:scaleX(0.92);transform-origin:0 0;">Design Assessment Meeting (DAM) #1</div>
<div class="d" style="left:290px;top:100px;width:37px;height:12px;">09/12</div>
<div class="d" style="left:328px;top:100px;width:37px;height:12px;">09/12</div>
<div style="left:375px;top:98px;width:3px;height:15px;background:#ffe599;border:1px solid #000"></div>
<div style="left:35px;top:112px;width:881px;height:15px;background:#d9d9d9;border-top:1px solid #000;border-bottom:1px solid #000"></div>
<div class="t b" style="left:37px;top:114px;width:800px;height:12px;transform:scaleX(0.92);transform-origin:0 0;">Phase B: Preliminary Design</div>
<div style="left:35px;top:126px;width:255px;height:15px;background:#a4c2f4;border-top:1px solid #000;border-bottom:1px solid #000;border-right:1px solid #000"></div>
<div style="left:289px;top:126px;width:77px;height:15px;background:#fff;border:1px solid #000"></div>
<div style="left:327px;top:126px;width:1px;height:15px;background:#000"></div>
<div class="t" style="left:37px;top:128px;width:272px;height:12px;transform:scaleX(0.92);transform-origin:0 0;">Mechanical CAD</div>
<div class="d" style="left:290px;top:128px;width:37px;height:12px;">09/18</div>
<div class="d" style="left:328px;top:128px;width:37px;height:12px;">11/07</div>
<div style="left:381px;top:126px;width:95px;height:15px;background:#a4c2f4;border:1px solid #000"></div>
<div style="left:35px;top:140px;width:255px;height:15px;background:#f9cb9c;border-top:1px solid #000;border-bottom:1px solid #000;border-right:1px solid #000"></div>
<div style="left:289px;top:140px;width:77px;height:15px;background:#fff;border:1px solid #000"></div>
<div style="left:327px;top:140px;width:1px;height:15px;background:#000"></div>
<div class="t" style="left:37px;top:142px;width:272px;height:12px;transform:scaleX(0.92);transform-origin:0 0;">Electrical 2D CAD</div>
<div class="d" style="left:290px;top:142px;width:37px;height:12px;">09/20</div>
<div class="d" style="left:328px;top:142px;width:37px;height:12px;">10/01</div>
<div style="left:383px;top:140px;width:19px;height:15px;background:#f9cb9c;border:1px solid #000"></div>
<div style="left:35px;top:154px;width:255px;height:15px;background:#b6d7a8;border-top:1px solid #000;border-bottom:1px solid #000;border-right:1px solid #000"></div>
<div style="left:289px;top:154px;width:77px;height:15px;background:#fff;border:1px solid #000"></div>
<div style="left:327px;top:154px;width:1px;height:15px;background:#000"></div>
<div class="t" style="left:37px;top:156px;width:272px;height:12px;transform:scaleX(0.92);transform-origin:0 0;">Contact Sponsors</div>
<div class="d" style="left:290px;top:156px;width:37px;height:12px;">09/23</div>
<div class="d" style="left:328px;top:156px;width:37px;height:12px;">11/07</div>
<div style="left:387px;top:154px;width:89px;height:15px;background:#b6d7a8;border:1px solid #000"></div>
<div style="left:35px;top:168px;width:255px;height:15px;background:#ffe599;border-top:1px solid #000;border-bottom:1px solid #000;border-right:1px solid #000"></div>
<div style="left:289px;top:168px;width:77px;height:15px;background:#fff;border:1px solid #000"></div>
<div style="left:327px;top:168px;width:1px;height:15px;background:#000"></div>
<div class="t" style="left:37px;top:170px;width:272px;height:12px;transform:scaleX(0.92);transform-origin:0 0;">System Requirements Review (SRR)</div>
<div class="d" style="left:290px;top:170px;width:37px;height:12px;">09/26</div>
<div class="d" style="left:328px;top:170px;width:37px;height:12px;">09/26</div>
<div style="left:389px;top:168px;width:3px;height:15px;background:#ffe599;border:1px solid #000"></div>
<div style="left:35px;top:182px;width:255px;height:15px;background:#dd7e6b;border-top:1px solid #000;border-bottom:1px solid #000;border-right:1px solid #000"></div>
<div style="left:289px;top:182px;width:77px;height:15px;background:#fff;border:1px solid #000"></div>
<div style="left:327px;top:182px;width:1px;height:15px;background:#000"></div>
<div class="t" style="left:37px;top:184px;width:272px;height:12px;transform:scaleX(0.92);transform-origin:0 0;">Statement of Support &amp; Statement of Rights Use</div>
<div class="d" style="left:290px;top:184px;width:37px;height:12px;">09/28</div>
<div class="d" style="left:328px;top:184px;width:37px;height:12px;">09/28</div>
<div style="left:395px;top:182px;width:3px;height:15px;background:#dd7e6b;border:1px solid #000"></div>
<div style="left:35px;top:196px;width:255px;height:15px;background:#dd7e6b;border-top:1px solid #000;border-bottom:1px solid #000;border-right:1px solid #000"></div>
<div style="left:289px;top:196px;width:77px;height:15px;background:#fff;border:1px solid #000"></div>
<div style="left:327px;top:196px;width:1px;height:15px;background:#000"></div>
<div class="t" style="left:37px;top:198px;width:272px;height:12px;transform:scaleX(0.92);transform-origin:0 0;">Project Management Plan (PMP)</div>
<div class="d" style="left:290px;top:198px;width:37px;height:12px;">09/28</div>
<div class="d" style="left:328px;top:198px;width:37px;height:12px;">09/28</div>
<div style="left:395px;top:196px;width:3px;height:15px;background:#dd7e6b;border:1px solid #000"></div>
<div style="left:35px;top:210px;width:255px;height:15px;background:#dd7e6b;border-top:1px solid #000;border-bottom:1px solid #000;border-right:1px solid #000"></div>
<div style="left:289px;top:210px;width:77px;height:15px;background:#fff;border:1px solid #000"></div>
<div style="left:327px;top:210px;width:1px;height:15px;background:#000"></div>
<div class="t" style="left:37px;top:212px;width:272px;height:12px;transform:scaleX(0.92);transform-origin:0 0;">System Requirements Review (SRR) Report</div>
<div class="d" style="left:290px;top:212px;width:37px;height:12px;">10/05</div>
<div class="d" style="left:328px;top:212px;width:37px;height:12px;">10/05</div>
<div style="left:407px;top:210px;width:3px;height:15px;background:#dd7e6b;border:1px solid #000"></div>
<div style="left:35px;top:224px;width:255px;height:15px;background:#b6d7a8;border-top:1px solid #000;border-bottom:1px solid #000;border-right:1px solid #000"></div>
<div style="left:289px;top:224px;width:77px;height:15px;background:#fff;border:1px solid #000"></div>
<div style="left:327px;top:224px;width:1px;height:15px;background:#000"></div>
<div class="t" style="left:37px;top:226px;width:272px;height:12px;transform:scaleX(0.92);transform-origin:0 0;">Food Fundraiser #1</div>
<div class="d" style="left:290px;top:226px;width:37px;height:12px;">10/06</div>
<div class="d" style="left:328px;top:226px;width:37px;height:12px;">10/06</div>
<div style="left:409px;top:224px;width:3px;height:15px;background:#b6d7a8;border:1px solid #000"></div>
<div style="left:35px;top:238px;width:255px;height:15px;background:#ffe599;border-top:1px solid #000;border-bottom:1px solid #000;border-right:1px solid #000"></div>
<div style="left:289px;top:238px;width:77px;height:15px;background:#fff;border:1px solid #000"></div>
<div style="left:327px;top:238px;width:1px;height:15px;background:#000"></div>
<div class="t" style="left:37px;top:240px;width:272px;height:12px;transform:scaleX(0.92);transform-origin:0 0;">Preliminary Design Review (PDR) &amp; DAM #2</div>
<div class="d" style="left:290px;top:240px;width:37px;height:12px;">10/10</div>
<div class="d" style="left:328px;top:240px;width:37px;height:12px;">10/10</div>
<div style="left:417px;top:238px;width:3px;height:15px;background:#ffe599;border:1px solid #000"></div>
<div style="left:35px;top:252px;width:881px;height:15px;background:#d9d9d9;border-top:1px solid #000;border-bottom:1px solid #000"></div>
<div class="t b" style="left:37px;top:254px;width:800px;height:12px;transform:scaleX(0.92);transform-origin:0 0;">Phase C: Critical Design</div>
<div style="left:35px;top:266px;width:255px;height:15px;background:#f9cb9c;border-top:1px solid #000;border-bottom:1px solid #000;border-right:1px solid #000"></div>
<div style="left:289px;top:266px;width:77px;height:15px;background:#fff;border:1px solid #000"></div>
<div style="left:327px;top:266px;width:1px;height:15px;background:#000"></div>
<div class="t" style="left:37px;top:268px;width:272px;height:12px;transform:scaleX(0.92);transform-origin:0 0;">Electrical 3D CAD</div>
<div class="d" style="left:290px;top:268px;width:37px;height:12px;">10/13</div>
<div class="d" style="left:328px;top:268px;width:37px;height:12px;">12/03</div>
<div style="left:423px;top:266px;width:105px;height:15px;background:#f9cb9c;border:1px solid #000"></div>
<div style="left:35px;top:280px;width:255px;height:15px;background:#b6d7a8;border-top:1px solid #000;border-bottom:1px solid #000;border-right:1px solid #000"></div>
<div style="left:289px;top:280px;width:77px;height:15px;background:#fff;border:1px solid #000"></div>
<div style="left:327px;top:280px;width:1px;height:15px;background:#000"></div>
<div class="t" style="left:37px;top:282px;width:272px;height:12px;transform:scaleX(0.92);transform-origin:0 0;">Social Fundraiser #1</div>
<div class="d" style="left:290px;top:282px;width:37px;height:12px;">11/07</div>
<div class="d" style="left:328px;top:282px;width:37px;height:12px;">11/07</div>
<div style="left:473px;top:280px;width:3px;height:15px;background:#b6d7a8;border:1px solid #000"></div>
<div style="left:35px;top:294px;width:255px;height:15px;background:#b6d7a8;border-top:1px solid #000;border-bottom:1px solid #000;border-right:1px solid #000"></div>
<div style="left:289px;top:294px;width:77px;height:15px;background:#fff;border:1px solid #000"></div>
<div style="left:327px;top:294px;width:1px;height:15px;background:#000"></div>
<div class="t" style="left:37px;top:296px;width:272px;height:12px;transform:scaleX(0.92);transform-origin:0 0;">Funds Received Deadline for 25-26 Rover</div>
<div class="d" style="left:290px;top:296px;width:37px;height:12px;">11/07</div>
<div class="d" style="left:328px;top:296px;width:37px;height:12px;">11/07</div>
<div style="left:473px;top:294px;width:3px;height:15px;background:#b6d7a8;border:1px solid #000"></div>
<div style="left:35px;top:308px;width:255px;height:15px;background:#ffe599;border-top:1px solid #000;border-bottom:1px solid #000;border-right:1px solid #000"></div>
<div style="left:289px;top:308px;width:77px;height:15px;background:#fff;border:1px solid #000"></div>
<div style="left:327px;top:308px;width:1px;height:15px;background:#000"></div>
<div class="t" style="left:37px;top:310px;width:272px;height:12px;transform:scaleX(0.92);transform-origin:0 0;">Critical Design Review (CDR) &amp; DAM #3</div>
<div class="d" style="left:290px;top:310px;width:37px;height:12px;">11/14</div>
<div class="d" style="left:328px;top:310px;width:37px;height:12px;">11/14</div>
<div style="left:487px;top:308px;width:3px;height:15px;background:#ffe599;border:1px solid #000"></div>
<div style="left:35px;top:322px;width:255px;height:15px;background:#b6d7a8;border-top:1px solid #000;border-bottom:1px solid #000;border-right:1px solid #000"></div>
<div style="left:289px;top:322px;width:77px;height:15px;background:#fff;border:1px solid #000"></div>
<div style="left:327px;top:322px;width:1px;height:15px;background:#000"></div>
<div class="t" style="left:37px;top:324px;width:272px;height:12px;transform:scaleX(0.92);transform-origin:0 0;">Order Parts</div>
<div class="d" style="left:290px;top:324px;width:37px;height:12px;">11/14</div>
<div class="d" style="left:328px;top:324px;width:37px;height:12px;">11/21</div>
<div style="left:487px;top:322px;width:17px;height:15px;background:#b6d7a8;border:1px solid #000"></div>
<div style="left:35px;top:336px;width:255px;height:15px;background:#b6d7a8;border-top:1px solid #000;border-bottom:1px solid #000;border-right:1px solid #000"></div>
<div style="left:289px;top:336px;width:77px;height:15px;background:#fff;border:1px solid #000"></div>
<div style="left:327px;top:336px;width:1px;height:15px;background:#000"></div>
<div class="t" style="left:37px;top:338px;width:272px;height:12px;transform:scaleX(0.92);transform-origin:0 0;">Food Fundraiser #2</div>
<div class="d" style="left:290px;top:338px;width:37px;height:12px;">12/05</div>
<div class="d" style="left:328px;top:338px;width:37px;height:12px;">12/05</div>
<div style="left:529px;top:336px;width:3px;height:15px;background:#b6d7a8;border:1px solid #000"></div>
<div style="left:35px;top:350px;width:255px;height:15px;background:#ffe599;border-top:1px solid #000;border-bottom:1px solid #000;border-right:1px solid #000"></div>
<div style="left:289px;top:350px;width:77px;height:15px;background:#fff;border:1px solid #000"></div>
<div style="left:327px;top:350px;width:1px;height:15px;background:#000"></div>
<div class="t" style="left:37px;top:352px;width:272px;height:12px;transform:scaleX(0.92);transform-origin:0 0;">Design Assessment Meeting (DAM) #4</div>
<div class="d" style="left:290px;top:352px;width:37px;height:12px;">12/12</div>
<div class="d" style="left:328px;top:352px;width:37px;height:12px;">12/12</div>
<div style="left:543px;top:350px;width:3px;height:15px;background:#ffe599;border:1px solid #000"></div>
<div style="left:35px;top:364px;width:255px;height:15px;background:#b6d7a8;border-top:1px solid #000;border-bottom:1px solid #000;border-right:1px solid #000"></div>
<div style="left:289px;top:364px;width:77px;height:15px;background:#fff;border:1px solid #000"></div>
<div style="left:327px;top:364px;width:1px;height:15px;background:#000"></div>
<div class="t" style="left:37px;top:366px;width:272px;height:12px;transform:scaleX(0.92);transform-origin:0 0;">Parts Received Deadline</div>
<div class="d" style="left:290px;top:366px;width:37px;height:12px;">12/12</div>
<div class="d" style="left:328px;top:366px;width:37px;height:12px;">12/12</div>
<div style="left:543px;top:364px;width:3px;height:15px;background:#b6d7a8;border:1px solid #000"></div>
<div style="left:35px;top:378px;width:255px;height:15px;background:#ffe599;border-top:1px solid #000;border-bottom:1px solid #000;border-right:1px solid #000"></div>
<div style="left:289px;top:378px;width:77px;height:15px;background:#fff;border:1px solid #000"></div>
<div style="left:327px;top:378px;width:1px;height:15px;background:#000"></div>
<div class="t" style="left:37px;top:380px;width:272px;height:12px;transform:scaleX(0.92);transform-origin:0 0;">Design Assessment Meeting (DAM) #5</div>
<div class="d" style="left:290px;top:380px;width:37px;height:12px;">01/09</div>
<div class="d" style="left:328px;top:380px;width:37px;height:12px;">01/09</div>
<div style="left:599px;top:378px;width:3px;height:15px;background:#ffe599;border:1px solid #000"></div>
<div style="left:35px;top:392px;width:881px;height:15px;background:#d9d9d9;border-top:1px solid #000;border-bottom:1px solid #000"></div>
<div class="t b" style="left:37px;top:394px;width:800px;height:12px;transform:scaleX(0.92);transform-origin:0 0;">Phase D: System Assembly and Testing</div>
<div style="left:35px;top:406px;width:255px;height:15px;background:#a4c2f4;border-top:1px solid #000;border-bottom:1px solid #000;border-right:1px solid #000"></div>
<div style="left:289px;top:406px;width:77px;height:15px;background:#fff;border:1px solid #000"></div>
<div style="left:327px;top:406px;width:1px;height:15px;background:#000"></div>
<div class="t" style="left:37px;top:408px;width:272px;height:12px;transform:scaleX(0.92);transform-origin:0 0;">Manufacturing</div>
<div class="d" style="left:290px;top:408px;width:37px;height:12px;">01/20</div>
<div class="d" style="left:328px;top:408px;width:37px;height:12px;">02/28</div>
<div style="left:621px;top:406px;width:81px;height:15px;background:#a4c2f4;border:1px solid #000"></div>
<div style="left:35px;top:420px;width:255px;height:15px;background:#dd7e6b;border-top:1px solid #000;border-bottom:1px solid #000;border-right:1px solid #000"></div>
<div style="left:289px;top:420px;width:77px;height:15px;background:#fff;border:1px solid #000"></div>
<div style="left:327px;top:420px;width:1px;height:15px;background:#000"></div>
<div class="t" style="left:37px;top:422px;width:272px;height:12px;transform:scaleX(0.92);transform-origin:0 0;">Team Photos and NASA Media Release</div>
<div class="d" style="left:290px;top:422px;width:37px;height:12px;">02/04</div>
<div class="d" style="left:328px;top:422px;width:37px;height:12px;">02/04</div>
<div style="left:651px;top:420px;width:3px;height:15px;background:#dd7e6b;border:1px solid #000"></div>
<div style="left:35px;top:434px;width:255px;height:15px;background:#b6d7a8;border-top:1px solid #000;border-bottom:1px solid #000;border-right:1px solid #000"></div>
<div style="left:289px;top:434px;width:77px;height:15px;background:#fff;border:1px solid #000"></div>
<div style="left:327px;top:434px;width:1px;height:15px;background:#000"></div>
<div class="t" style="left:37px;top:436px;width:272px;height:12px;transform:scaleX(0.92);transform-origin:0 0;">Food Fundraiser #3</div>
<div class="d" style="left:290px;top:436px;width:37px;height:12px;">02/06</div>
<div class="d" style="left:328px;top:436px;width:37px;height:12px;">02/06</div>
<div style="left:655px;top:434px;width:3px;height:15px;background:#b6d7a8;border:1px solid #000"></div>
<div style="left:35px;top:448px;width:255px;height:15px;background:#ffe599;border-top:1px solid #000;border-bottom:1px solid #000;border-right:1px solid #000"></div>
<div style="left:289px;top:448px;width:77px;height:15px;background:#fff;border:1px solid #000"></div>
<div style="left:327px;top:448px;width:1px;height:15px;background:#000"></div>
<div class="t" style="left:37px;top:450px;width:272px;height:12px;transform:scaleX(0.92);transform-origin:0 0;">Design Assessment Meeting (DAM) #6</div>
<div class="d" style="left:290px;top:450px;width:37px;height:12px;">02/13</div>
<div class="d" style="left:328px;top:450px;width:37px;height:12px;">02/13</div>
<div style="left:669px;top:448px;width:3px;height:15px;background:#ffe599;border:1px solid #000"></div>
<div style="left:35px;top:462px;width:255px;height:15px;background:#dd7e6b;border-top:1px solid #000;border-bottom:1px solid #000;border-right:1px solid #000"></div>
<div style="left:289px;top:462px;width:77px;height:15px;background:#fff;border:1px solid #000"></div>
<div style="left:327px;top:462px;width:1px;height:15px;background:#000"></div>
<div class="t" style="left:37px;top:464px;width:272px;height:12px;transform:scaleX(0.92);transform-origin:0 0;">STEM Industry Plan</div>
<div class="d" style="left:290px;top:464px;width:37px;height:12px;">02/26</div>
<div class="d" style="left:328px;top:464px;width:37px;height:12px;">02/26</div>
<div style="left:695px;top:462px;width:3px;height:15px;background:#dd7e6b;border:1px solid #000"></div>
<div style="left:35px;top:476px;width:255px;height:15px;background:#b6d7a8;border-top:1px solid #000;border-bottom:1px solid #000;border-right:1px solid #000"></div>
<div style="left:289px;top:476px;width:77px;height:15px;background:#fff;border:1px solid #000"></div>
<div style="left:327px;top:476px;width:1px;height:15px;background:#000"></div>
<div class="t" style="left:37px;top:478px;width:272px;height:12px;transform:scaleX(0.92);transform-origin:0 0;">CSULB College of Engineering Spring Allocation</div>
<div class="d" style="left:290px;top:478px;width:37px;height:12px;">03/11</div>
<div class="d" style="left:328px;top:478px;width:37px;height:12px;">03/11</div>
<div style="left:721px;top:476px;width:3px;height:15px;background:#b6d7a8;border:1px solid #000"></div>
<div style="left:35px;top:490px;width:255px;height:15px;background:#ffe599;border-top:1px solid #000;border-bottom:1px solid #000;border-right:1px solid #000"></div>
<div style="left:289px;top:490px;width:77px;height:15px;background:#fff;border:1px solid #000"></div>
<div style="left:327px;top:490px;width:1px;height:15px;background:#000"></div>
<div class="t" style="left:37px;top:492px;width:272px;height:12px;transform:scaleX(0.92);transform-origin:0 0;">Design Assessment Meeting (DAM) #7</div>
<div class="d" style="left:290px;top:492px;width:37px;height:12px;">03/13</div>
<div class="d" style="left:328px;top:492px;width:37px;height:12px;">03/13</div>
<div style="left:725px;top:490px;width:3px;height:15px;background:#ffe599;border:1px solid #000"></div>
<div style="left:35px;top:504px;width:255px;height:15px;background:#b6d7a8;border-top:1px solid #000;border-bottom:1px solid #000;border-right:1px solid #000"></div>
<div style="left:289px;top:504px;width:77px;height:15px;background:#fff;border:1px solid #000"></div>
<div style="left:327px;top:504px;width:1px;height:15px;background:#000"></div>
<div class="t" style="left:37px;top:506px;width:272px;height:12px;transform:scaleX(0.92);transform-origin:0 0;">Social Fundraiser #2</div>
<div class="d" style="left:290px;top:506px;width:37px;height:12px;">03/13</div>
<div class="d" style="left:328px;top:506px;width:37px;height:12px;">03/13</div>
<div style="left:725px;top:504px;width:3px;height:15px;background:#b6d7a8;border:1px solid #000"></div>
<div style="left:35px;top:518px;width:881px;height:15px;background:#d9d9d9;border-top:1px solid #000;border-bottom:1px solid #000"></div>
<div class="t b" style="left:37px;top:520px;width:800px;height:12px;transform:scaleX(0.92);transform-origin:0 0;">Phase E: System Operation and Adjustments</div>
<div style="left:35px;top:532px;width:255px;height:15px;background:#dd7e6b;border-top:1px solid #000;border-bottom:1px solid #000;border-right:1px solid #000"></div>
<div style="left:289px;top:532px;width:77px;height:15px;background:#fff;border:1px solid #000"></div>
<div style="left:327px;top:532px;width:1px;height:15px;background:#000"></div>
<div class="t" style="left:37px;top:534px;width:272px;height:12px;transform:scaleX(0.92);transform-origin:0 0;">Presentation and Demonstration</div>
<div class="d" style="left:290px;top:534px;width:37px;height:12px;">03/20</div>
<div class="d" style="left:328px;top:534px;width:37px;height:12px;">03/20</div>
<div style="left:739px;top:532px;width:3px;height:15px;background:#dd7e6b;border:1px solid #000"></div>
<div style="left:35px;top:546px;width:255px;height:15px;background:#dd7e6b;border-top:1px solid #000;border-bottom:1px solid #000;border-right:1px solid #000"></div>
<div style="left:289px;top:546px;width:77px;height:15px;background:#fff;border:1px solid #000"></div>
<div style="left:327px;top:546px;width:1px;height:15px;background:#000"></div>
<div class="t" style="left:37px;top:548px;width:272px;height:12px;transform:scaleX(0.92);transform-origin:0 0;">Systems Engineering Paper</div>
<div class="d" style="left:290px;top:548px;width:37px;height:12px;">04/02</div>
<div class="d" style="left:328px;top:548px;width:37px;height:12px;">04/02</div>
<div style="left:765px;top:546px;width:3px;height:15px;background:#dd7e6b;border:1px solid #000"></div>
<div style="left:35px;top:560px;width:255px;height:15px;background:#ffe599;border-top:1px solid #000;border-bottom:1px solid #000;border-right:1px solid #000"></div>
<div style="left:289px;top:560px;width:77px;height:15px;background:#fff;border:1px solid #000"></div>
<div style="left:327px;top:560px;width:1px;height:15px;background:#000"></div>
<div class="t" style="left:37px;top:562px;width:272px;height:12px;transform:scaleX(0.92);transform-origin:0 0;">Design Assessment Meeting (DAM) #8</div>
<div class="d" style="left:290px;top:562px;width:37px;height:12px;">04/10</div>
<div class="d" style="left:328px;top:562px;width:37px;height:12px;">04/10</div>
<div style="left:781px;top:560px;width:3px;height:15px;background:#ffe599;border:1px solid #000"></div>
<div style="left:35px;top:574px;width:255px;height:15px;background:#b6d7a8;border-top:1px solid #000;border-bottom:1px solid #000;border-right:1px solid #000"></div>
<div style="left:289px;top:574px;width:77px;height:15px;background:#fff;border:1px solid #000"></div>
<div style="left:327px;top:574px;width:1px;height:15px;background:#000"></div>
<div class="t" style="left:37px;top:576px;width:272px;height:12px;transform:scaleX(0.92);transform-origin:0 0;">Food Fundraiser #4</div>
<div class="d" style="left:290px;top:576px;width:37px;height:12px;">04/10</div>
<div class="d" style="left:328px;top:576px;width:37px;height:12px;">04/10</div>
<div style="left:781px;top:574px;width:3px;height:15px;background:#b6d7a8;border:1px solid #000"></div>
<div style="left:35px;top:588px;width:255px;height:15px;background:#dd7e6b;border-top:1px solid #000;border-bottom:1px solid #000;border-right:1px solid #000"></div>
<div style="left:289px;top:588px;width:77px;height:15px;background:#fff;border:1px solid #000"></div>
<div style="left:327px;top:588px;width:1px;height:15px;background:#000"></div>
<div class="t" style="left:37px;top:590px;width:272px;height:12px;transform:scaleX(0.92);transform-origin:0 0;">Proof of Life Video</div>
<div class="d" style="left:290px;top:590px;width:37px;height:12px;">04/30</div>
<div class="d" style="left:328px;top:590px;width:37px;height:12px;">04/30</div>
<div style="left:821px;top:588px;width:3px;height:15px;background:#dd7e6b;border:1px solid #000"></div>
<div style="left:35px;top:602px;width:255px;height:15px;background:#dd7e6b;border-top:1px solid #000;border-bottom:1px solid #000;border-right:1px solid #000"></div>
<div style="left:289px;top:602px;width:77px;height:15px;background:#fff;border:1px solid #000"></div>
<div style="left:327px;top:602px;width:1px;height:15px;background:#000"></div>
<div class="t" style="left:37px;top:604px;width:272px;height:12px;transform:scaleX(0.92);transform-origin:0 0;">Robot Data Specifications Report</div>
<div class="d" style="left:290px;top:604px;width:37px;height:12px;">04/30</div>
<div class="d" style="left:328px;top:604px;width:37px;height:12px;">04/30</div>
<div style="left:821px;top:602px;width:3px;height:15px;background:#dd7e6b;border:1px solid #000"></div>
<div style="left:35px;top:616px;width:255px;height:15px;background:#dd7e6b;border-top:1px solid #000;border-bottom:1px solid #000;border-right:1px solid #000"></div>
<div style="left:289px;top:616px;width:77px;height:15px;background:#fff;border:1px solid #000"></div>
<div style="left:327px;top:616px;width:1px;height:15px;background:#000"></div>
<div class="t" style="left:37px;top:618px;width:272px;height:12px;transform:scaleX(0.92);transform-origin:0 0;">List of Students / Faculty Attending KSC</div>
<div class="d" style="left:290px;top:618px;width:37px;height:12px;">05/06</div>
<div class="d" style="left:328px;top:618px;width:37px;height:12px;">05/06</div>
<div style="left:833px;top:616px;width:3px;height:15px;background:#dd7e6b;border:1px solid #000"></div>
<div style="left:35px;top:630px;width:255px;height:15px;background:#dd7e6b;border-top:1px solid #000;border-bottom:1px solid #000;border-right:1px solid #000"></div>
<div style="left:289px;top:630px;width:77px;height:15px;background:#fff;border:1px solid #000"></div>
<div style="left:327px;top:630px;width:1px;height:15px;background:#000"></div>
<div class="t" style="left:37px;top:632px;width:272px;height:12px;transform:scaleX(0.92);transform-origin:0 0;">Liability Waiver – Artemis Arena</div>
<div class="d" style="left:290px;top:632px;width:37px;height:12px;">05/06</div>
<div class="d" style="left:328px;top:632px;width:37px;height:12px;">05/06</div>
<div style="left:833px;top:630px;width:3px;height:15px;background:#dd7e6b;border:1px solid #000"></div>
<div style="left:35px;top:644px;width:255px;height:15px;background:#dd7e6b;border-top:1px solid #000;border-bottom:1px solid #000;border-right:1px solid #000"></div>
<div style="left:289px;top:644px;width:77px;height:15px;background:#fff;border:1px solid #000"></div>
<div style="left:327px;top:644px;width:1px;height:15px;background:#000"></div>
<div class="t" style="left:37px;top:646px;width:272px;height:12px;transform:scaleX(0.92);transform-origin:0 0;">Regulated Waste Management Overview</div>
<div class="d" style="left:290px;top:646px;width:37px;height:12px;">05/06</div>
<div class="d" style="left:328px;top:646px;width:37px;height:12px;">05/06</div>
<div style="left:833px;top:644px;width:3px;height:15px;background:#dd7e6b;border:1px solid #000"></div>
<div style="left:35px;top:658px;width:881px;height:15px;background:#d9d9d9;border-top:1px solid #000;border-bottom:1px solid #000"></div>
<div class="t b" style="left:37px;top:660px;width:800px;height:12px;transform:scaleX(0.92);transform-origin:0 0;">Phase F: Project Closure</div>
<div style="left:35px;top:672px;width:255px;height:15px;background:#d5a6bd;border-top:1px solid #000;border-bottom:1px solid #000;border-right:1px solid #000"></div>
<div style="left:289px;top:672px;width:77px;height:15px;background:#fff;border:1px solid #000"></div>
<div style="left:327px;top:672px;width:1px;height:15px;background:#000"></div>
<div class="t" style="left:37px;top:674px;width:272px;height:12px;transform:scaleX(0.92);transform-origin:0 0;">The Qualifying Challenge at the UCF</div>
<div class="d" style="left:290px;top:674px;width:37px;height:12px;">05/12</div>
<div class="d" style="left:328px;top:674px;width:37px;height:12px;">05/17</div>
<div style="left:845px;top:672px;width:13px;height:15px;background:#d5a6bd;border:1px solid #000"></div>
<div style="left:35px;top:686px;width:255px;height:15px;background:#d5a6bd;border-top:1px solid #000;border-bottom:1px solid #000;border-right:1px solid #000"></div>
<div style="left:289px;top:686px;width:77px;height:15px;background:#fff;border:1px solid #000"></div>
<div style="left:327px;top:686px;width:1px;height:15px;background:#000"></div>
<div class="t" style="left:37px;top:688px;width:272px;height:12px;transform:scaleX(0.92);transform-origin:0 0;">The Challenge at the Kennedy Space Center</div>
<div class="d" style="left:290px;top:688px;width:37px;height:12px;">05/19</div>
<div class="d" style="left:328px;top:688px;width:37px;height:12px;">05/21</div>
<div style="left:859px;top:686px;width:7px;height:15px;background:#d5a6bd;border:1px solid #000"></div>
<div style="left:35px;top:700px;width:255px;height:15px;background:#d5a6bd;border-top:1px solid #000;border-bottom:1px solid #000;border-right:1px solid #000"></div>
<div style="left:289px;top:700px;width:77px;height:15px;background:#fff;border:1px solid #000"></div>
<div style="left:327px;top:700px;width:1px;height:15px;background:#000"></div>
<div class="t" style="left:37px;top:702px;width:272px;height:12px;transform:scaleX(0.92);transform-origin:0 0;">Project Completion</div>
<div class="d" style="left:290px;top:702px;width:37px;height:12px;">05/29</div>
<div class="d" style="left:328px;top:702px;width:37px;height:12px;">05/29</div>
<div style="left:879px;top:700px;width:3px;height:15px;background:#d5a6bd;border:1px solid #000"></div>
<div style="left:35px;top:1px;width:255px;height:1px;background:#1a73e8"></div>
<div style="left:35px;top:1px;width:1px;height:14px;background:#1a73e8"></div>
<div style="left:288px;top:1px;width:2px;height:14px;background:#1a73e8"></div>
<div style="left:35px;top:13px;width:255px;height:2px;background:#1a73e8"></div>
</body></html>
